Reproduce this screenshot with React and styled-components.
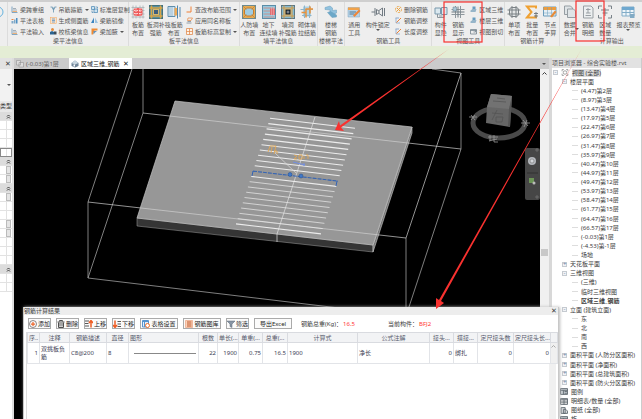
import styled, { createGlobalStyle } from 'styled-components';

const RED = '#f8312f';

const floors = [
  '(4.47)第2层',
  '(8.97)第3层',
  '(13.47)第4层',
  '(17.97)第5层',
  '(22.47)第6层',
  '(26.97)第7层',
  '(31.47)第8层',
  '(35.97)第9层',
  '(40.47)第10层',
  '(44.97)第11层',
  '(49.47)第12层',
  '(53.97)第13层',
  '(58.47)第14层',
  '(61.77)第15层',
  '(64.47)第16层',
  '(66.57)第17层',
  '(-0.03)第1层',
  '(-4.53)第-1层',
  '场地',
];

const tree = [
  { text: '视图 (全部)', level: 0, sign: '-', icon: 'views', selected: true },
  { text: '楼层平面', level: 1, sign: '-' },
  ...floors.map((text) => ({ text, level: 2 })),
  { text: '天花板平面', level: 1, sign: '+' },
  { text: '三维视图', level: 1, sign: '-' },
  { text: '(三维)', level: 2 },
  { text: '临时三维视图', level: 2 },
  { text: '区域三维_钢筋', level: 2, bold: true },
  { text: '立面 (建筑立面)', level: 1, sign: '-' },
  { text: '东', level: 2 },
  { text: '北', level: 2 },
  { text: '南', level: 2 },
  { text: '西', level: 2 },
  { text: '面积平面 (人防分区面积)', level: 1, sign: '+' },
  { text: '面积平面 (净面积)', level: 1, sign: '+' },
  { text: '面积平面 (总建筑面积)', level: 1, sign: '+' },
  { text: '面积平面 (防火分区面积)', level: 1, sign: '+' },
  { text: '图例', level: 0, icon: 'legend' },
  { text: '明细表/数量 (全部)', level: 0, icon: 'schedule' },
  { text: '图纸 (全部)', level: 0, icon: 'sheet' },
  { text: '族', level: 0, icon: 'legend' },
];

const ribbon = [
  {
    label: '梁平法信息',
    width: 122,
    items: [
      { width: 39, list: [['beam', '梁跨重组'], ['bars', '平法表格'], ['beam', '平法输入']] },
      { width: 42, list: [['hanger', '吊筋箍筋', true], ['side', '生成侧面筋'], ['person', '校核梁信息']] },
      { width: 41, list: [['copy', '标准层复制'], ['mirror', '梁筋镜像'], ['haunch', '梁加腋', true]] },
    ],
  },
  {
    label: '板平法信息',
    width: 111,
    items: [
      { width: 18, icon: 'slabGrid', lines: ['板筋', '布置'] },
      { width: 19, icon: 'slabHole', lines: ['板洞补', '强筋'] },
      { width: 19, icon: 'raft', lines: ['筏板筋', '布置'] },
      { width: 55, list: [['range', '查改布筋范围', true], ['apply', '应用同名称板'], ['window', '板筋标高复制', true]] },
    ],
  },
  {
    label: '墙平法信息',
    width: 78,
    items: [
      { width: 19, icon: 'shelter', lines: ['人防墙', '布置'] },
      { width: 19, icon: 'under', lines: ['地下', '连续墙'] },
      { width: 19, icon: 'wallHole', lines: ['墙洞', '补强筋'] },
      { width: 19, icon: 'brick', lines: ['砌体墙', '拉结筋'] },
    ],
  },
  {
    label: '楼梯平法',
    width: 27,
    items: [{ width: 26, icon: 'stair', lines: ['楼梯', '钢筋'] }],
  },
  {
    label: '钢筋工具',
    width: 87,
    items: [
      { width: 19, icon: 'note', lines: ['通用', '工具'] },
      { width: 30, icon: 'lock', lines: ['构件锁定'], more: true },
      { width: 38, list: [['remove', '删除钢筋'], ['adjust', '钢筋调整'], ['adjust', '长度调整']] },
    ],
  },
  {
    label: '视图工具',
    width: 73,
    items: [
      { width: 18, icon: 'display', lines: ['构件', '显隐'] },
      { width: 19, icon: 'cross', lines: ['钢筋', '显示'] },
      { width: 36, list: [['house', '区域三维'], ['house', '楼层三维'], ['section', '视图剖切']] },
    ],
  },
  {
    label: '钢筋计算',
    width: 55,
    items: [
      { width: 18, icon: 'globe', lines: ['单项', '布置'] },
      { width: 18, icon: 'sigma', lines: ['批量', '布置'] },
      { width: 18, icon: 'table', lines: ['节点', '手算'] },
    ],
  },
  {
    label: '计算输出',
    width: 104,
    items: [
      { width: 19, icon: 'merge', lines: ['数据', '合并'], side: true },
      { width: 18, icon: 'detail', lines: ['钢筋', '明细'] },
      { width: 17, icon: 'region', lines: ['区域', '数量'] },
      { width: 30, icon: 'report', lines: ['报表预览'], more: true },
      { width: 20, icon: 'report', lines: [] },
    ],
  },
];

const columns = [
  { title: '序..', value: '1', width: 12, align: 'right' },
  { title: '注释', value: '双挑板负筋', width: 30, wrap: true },
  { title: '钢筋描述', value: 'C8@200', width: 37 },
  { title: '直径', value: '8', width: 22 },
  { title: '图形', value: 'shape', width: 70, headAlign: 'left' },
  { title: '根数', value: '22', width: 19, align: 'right' },
  { title: '单长(...', value: '1900', width: 21, align: 'right' },
  { title: '单重(...', value: '0.75', width: 24, align: 'right' },
  { title: '总重(...', value: '16.5', width: 25, align: 'right' },
  { title: '计算式', value: '1900', width: 70 },
  { title: '公式注解', value: '净长', width: 72 },
  { title: '接头...', value: '0', width: 24, align: 'right' },
  { title: '搭接...', value: '绑扎', width: 24 },
  { title: '定尺接头数', value: '0', width: 36, align: 'right' },
  { title: '定尺接头长...', value: '0', width: 37, align: 'right' },
];

// property grid rows: h = section header, b = row with a small button
const props = ['h', '', '', '', 'box', 'h', 'b', 'b', 'h', 'b', '', '', 'b', 'b', '', '', '', 'h', '', ''];

const smallIcons = {
  beam: (
    <g fill="none" strokeWidth="1.5">
      <path d="M2 1v12h11" stroke="#5c8fb5" />
      <path d="M4 5h6M4 8h8" stroke="#8b9aa6" />
      <path d="M3 11h9" stroke="#ee9c4f" />
    </g>
  ),
  bars: (
    <g>
      <path d="M1 8h4v5H1zM6 5h3v8H6z" fill="#80a9c8" />
      <path d="M10 2h3v11h-3z" fill="#4c8ec2" />
      <path d="M1 5h4" stroke="#ec8744" strokeWidth="2" />
    </g>
  ),
  hanger: <path d="M1 2h4l2 4 2-4h4M7 6v7M4 3l3 5 3-5" fill="none" stroke="#6794b1" strokeWidth="1.6" />,
  side: (
    <g fill="none">
      <rect x="1" y="1" width="12" height="12" fill="#fbe3c9" stroke="#f2a65f" />
      <path d="M4 4h6M4 7h6M4 10h6" stroke="#568fc4" strokeWidth="1.5" />
    </g>
  ),
  person: (
    <g>
      <circle cx="5" cy="3" r="3" fill="#e68c3d" />
      <path d="M0 13V8l4-2 4 2v5z" fill="#2d6490" />
      <path d="M8 7h5v6H8z" fill="#3b4b58" />
    </g>
  ),
  copy: (
    <g fill="none" stroke="#508bb5" strokeWidth="1.5">
      <path d="M1 1h6v6H1zM6 6h7v7H6z" fill="#cce3f1" />
      <path d="M9 2h4v3M2 9v4h3" />
    </g>
  ),
  mirror: (
    <g>
      <path d="M6 1v11H0z" fill="#3c85c0" />
      <path d="M8 1v11h6z" fill="#9dc3df" />
    </g>
  ),
  haunch: (
    <g>
      <path d="M1 1h12v4H7L4 13H1z" fill="#f08b33" />
      <path d="M5 6h7l-4 3-3 4z" fill="#5d91bb" />
    </g>
  ),
  range: <path d="M10 1v11H1" fill="none" stroke="#f08037" strokeWidth="2" />,
  apply: (
    <g fill="none" strokeWidth="1.5">
      <path d="M4 2h9l-3 5H3z" stroke="#e98b48" />
      <path d="M1 12h10M3 9h7" stroke="#788793" />
    </g>
  ),
  window: <path d="M1 1h12v12H1zM7 1v12M1 7h12" fill="#fff2e6" stroke="#df884c" strokeWidth="1.5" />,
  remove: (
    <g fill="none" stroke="#eaa13d" strokeWidth="2">
      <circle cx="7" cy="7" r="6" strokeDasharray="4 2" />
      <path d="M4 4l6 6M10 4l-6 6" />
    </g>
  ),
  adjust: (
    <g fill="none" strokeWidth="2">
      <path d="M2 2v10h8" stroke="#9cb6d4" />
      <path d="M3 11l9-9" stroke="#ec8136" />
      <path d="M1 2h7" stroke="#8fa9cb" />
    </g>
  ),
  house: (
    <g>
      <path d="M5 1h6v9H5z" fill="#669cc0" />
      <path d="M1 9l4-3h8l-2 6H1z" fill="#96b5c9" />
    </g>
  ),
  section: <path d="M1 3h12v9H1zM1 5h12M7 8h4V5" fill="none" stroke="#6e7d88" strokeWidth="1.5" />,
};

const bigIcons = {
  slabGrid: (
    <g fill="none">
      <path d="M4 1v26M10 1v26M18 1v26M24 1v26M1 5h26M1 11h26M1 18h26M1 24h26" stroke="#a5adb2" strokeWidth="1.5" />
      <rect x="5" y="6" width="18" height="16" rx="5" fill="#f05c5c" />
      <path d="M10 6v16M18 6v16M6 11h16M6 17h16" stroke="#fff" strokeWidth="1.5" strokeDasharray="3 2" />
    </g>
  ),
  slabHole: (
    <g fill="none">
      <rect x="1" y="1" width="26" height="26" fill="#568e9f" stroke="#42717d" strokeWidth="2" />
      <path d="M5 1v26M23 1v26M1 6h26M1 22h26" stroke="#d7a547" strokeWidth="3" />
      <rect x="9" y="9" width="10" height="10" fill="#3f5f7d" stroke="#d8b76c" strokeWidth="2" />
    </g>
  ),
  raft: (
    <g>
      <path d="M2 3h14v20H2z" fill="#d7e7f2" stroke="#5e8ead" strokeWidth="2" />
      <path d="M6 3v20M10 3v20" stroke="#5e8ead" />
      <path d="M15 6h7v15h-7z" fill="#ecaa58" />
      <path d="M21 1v26M26 4v20" stroke="#5087af" strokeWidth="2" />
    </g>
  ),
  shelter: (
    <g fill="none">
      <rect x="1" y="1" width="26" height="26" fill="#e7ab52" stroke="#6c8a8f" strokeWidth="2" />
      <path d="M9 6h10l4 4v8l-4 4H9l-4-4v-8z" fill="#a0cce1" stroke="#c87c2a" strokeWidth="2" />
      <path d="M2 2l7 7M26 2l-7 7M2 26l7-7M26 26l-7-7" stroke="#9c7339" />
    </g>
  ),
  under: (
    <g>
      <rect x="1" y="1" width="26" height="26" fill="#95c9df" stroke="#5c8da7" strokeWidth="2" />
      <path d="M3 6h22M3 12h22M3 18h22M3 24h22" stroke="#db7f72" strokeWidth="1.5" />
      <path d="M16 7h10v13H16z" fill="#df6d72" />
      <path d="M19 4v18M23 4v18" stroke="#f3b9b9" />
    </g>
  ),
  wallHole: (
    <g fill="none">
      <rect x="1" y="1" width="26" height="26" fill="#87bad1" stroke="#5b7784" strokeWidth="2" />
      <path d="M6 1v26M22 1v26M1 6h26M1 22h26" stroke="#d39a44" strokeWidth="2" />
      <rect x="8" y="8" width="12" height="12" fill="#182530" stroke="#e0b56a" strokeWidth="2" />
      <path d="M14 11v6M11 14h6" stroke="#fff" />
    </g>
  ),
  brick: (
    <g fill="none">
      <path d="M6 3h16v20H6z" fill="#add2e5" />
      <path d="M1 9h25M4 21h19M9 1v25M19 1v25" stroke="#8fb4c9" strokeWidth="2" />
      <path d="M3 15h9M12 7v18M12 8h14M20 3v14" stroke="#e7923d" strokeWidth="3" />
    </g>
  ),
  stair: (
    <g stroke="#6b9fbc">
      <path d="M2 5l10-3 5 4v5l8-1v6l-7 3-6-5v-4L2 9z" fill="#91c2df" />
      <path d="M7 15l6-2 12 7v4l-9 1z" fill="#6ba8c9" />
    </g>
  ),
  note: (
    <g>
      <path d="M2 5h23v19H2z" fill="#b7d3e8" stroke="#7fa3bd" />
      <path d="M2 5h23v5H2z" fill="#f0a24a" />
      <path d="M5 14h13M5 18h10" stroke="#527891" strokeWidth="2" />
      <path d="M12 21L24 9l3 3-12 12z" fill="#ee8638" />
    </g>
  ),
  lock: (
    <path d="M1 14h7M8 6v16M11 9l5 3v4l-5 3zM16 11l7-5v16l-7-5M27 6v16" fill="none" stroke="#717a82" strokeWidth="2" />
  ),
  display: (
    <g fill="none">
      <path d="M2 6h11v12H2zM15 5h11v14H15z" fill="#dbe8ef" stroke="#7998ac" strokeWidth="2" />
      <path d="M7 18v7h13v-7M10 22h7" stroke="#8c969d" strokeWidth="2" />
    </g>
  ),
  cross: (
    <g fill="none">
      <path d="M9 2v24M19 2v24M1 9h26M1 19h26" stroke="#8d979d" strokeWidth="2" />
      <path d="M14 3v22M1 14h26" stroke="#717d84" strokeWidth="2" />
      <path d="M4 4h7v8H4z" fill="#aac6d5" stroke="#667f8d" />
    </g>
  ),
  globe: (
    <g fill="none" stroke="#7b8185" strokeWidth="2">
      <rect x="5" y="5" width="18" height="18" rx="5" fill="#e3e5e6" />
      <path d="M1 10h26M1 18h26M10 2v24M18 2v24" />
    </g>
  ),
  sigma: (
    <g fill="none">
      <path d="M22 7V3H4l9 11L4 25h18v-5" stroke="#efa031" strokeWidth="4" />
      <path d="M22 14v12M18 17h8M18 22h8" stroke="#777f84" strokeWidth="2" />
    </g>
  ),
  table: (
    <g>
      <path d="M1 4h25v18H1z" fill="#e6eff5" stroke="#6a9cbc" strokeWidth="2" />
      <path d="M1 4h25v6H1z" fill="#ec9c3e" />
      <path d="M1 16h24M9 5v16M17 5v16" stroke="#6a9cbc" />
      <path d="M14 23L24 11l3 3-9 11z" fill="#e78a36" />
    </g>
  ),
  merge: (
    <g fill="#dfe4e7" stroke="#959da3" strokeWidth="2">
      <path d="M3 2h12l4 4v13H3z" />
      <path d="M9 8h12l4 4v13H9z" />
    </g>
  ),
  detail: (
    <g fill="none" stroke="#999fa4" strokeWidth="2">
      <path d="M5 2h15l4 4v20H5z" fill="#eceff0" />
      <path d="M10 9h9M14 6v10M10 16h9M9 21h11" />
    </g>
  ),
  region: (
    <g fill="none" stroke="#7a8389" strokeWidth="2">
      <path d="M1 8V2h7M20 2h7v6M1 20v6h7M20 26h7v-6M6 10h16M9 16h10M14 6v16" />
    </g>
  ),
  report: (
    <g>
      <path d="M2 4h24v18H2z" fill="#eff6fa" stroke="#83adc8" strokeWidth="2" />
      <path d="M2 4h24v6H2z" fill="#6fa8cf" />
      <path d="M2 15h24M10 10v12M18 10v12" stroke="#83adc8" strokeWidth="2" />
      <path d="M18 18h9v8h-9z" fill="#82abc5" />
    </g>
  ),
};

const toolIcons = {
  add: (
    <g fill="none" stroke="#ed682d" strokeWidth="2">
      <circle cx="8" cy="8" r="7" stroke="#686060" strokeWidth="1.5" />
      <path d="M8 4v8M4 8h8" strokeWidth="2.5" />
    </g>
  ),
  del: (
    <g fill="none" stroke="#4e4e4e" strokeWidth="2">
      <path d="M1 4h14M5 3V1h6v2M3 5v10h10V5M6 6v7M10 6v7" />
    </g>
  ),
  up: (
    <g fill="none">
      <path d="M0 2h8M0 7h7M0 12h8" stroke="#555" strokeWidth="2" />
      <path d="M12 15V3M8 6l4-5 4 5" stroke="#ee5d24" strokeWidth="3" />
    </g>
  ),
  down: (
    <g fill="none">
      <path d="M9 3h7M9 8h7M9 13h7" stroke="#555" strokeWidth="2" />
      <path d="M4 1v12M0 10l4 5 4-5" stroke="#ee5d24" strokeWidth="3" />
    </g>
  ),
  setting: (
    <g fill="none">
      <path d="M1 1h12v13H1z" fill="#e7f0fa" stroke="#5794ce" strokeWidth="2" />
      <path d="M1 3h12M5 3v11" stroke="#5794ce" strokeWidth="2" />
      <circle cx="11" cy="11" r="4" stroke="#ee6f2b" strokeWidth="2" fill="#fff" />
    </g>
  ),
  library: (
    <g>
      <path d="M1 1h14v14H1z" fill="#fbd4bb" stroke="#e78a60" />
      <path d="M4 4h9M4 8h9M4 12h9" stroke="#bf562b" strokeWidth="2" />
    </g>
  ),
  filter: <path d="M0 2h16l-6 6v7l-4-2V8z" fill="#8996a5" stroke="#596777" />,
};

const treeIcons = {
  views: (
    <g fill="none" stroke="#696969">
      <circle cx="6" cy="6" r="3" />
      <path d="M1 4V1h3M8 1h3v3M1 8v3h3M8 11h3V8" />
    </g>
  ),
  legend: <path d="M0 1h12v10H0zM0 4h12M5 4v7M7 6h4M7 9h4" fill="#c5cbd0" stroke="#5e676e" strokeWidth="1.5" />,
  schedule: <path d="M0 1h12v10H0zM0 3h12M0 7h12M6 3v8" fill="#ddd" stroke="#5e676e" strokeWidth="1.5" />,
  sheet: <path d="M1 1h7v10H1zM5 4h4l3 3v4H5z" fill="#d7dadd" stroke="#5e676e" strokeWidth="1.5" />,
};

function RibbonItem({ item }) {
  if (item.list) {
    return (
      <SmallList $w={item.width}>
        {item.list.map(([icon, text, more]) => (
          <SmallButton key={text}>
            <svg width="7" height="7" viewBox="0 0 14 14">
              {smallIcons[icon]}
            </svg>
            {text}
            {more && <Caret />}
          </SmallButton>
        ))}
      </SmallList>
    );
  }
  return (
    <BigButton $w={item.width}>
      <svg width="14" height="14" viewBox="0 0 28 28">
        {bigIcons[item.icon]}
      </svg>
      {item.lines.map((line) => (
        <span key={line}>{line}</span>
      ))}
      {item.more && <Caret />}
      {item.side && <SideCaret />}
    </BigButton>
  );
}

function Model() {
  const rebars = Array.from({ length: 21 }, (_, i) => i);

  return (
    <ModelSvg viewBox="14 69 526 350" preserveAspectRatio="xMinYMin slice">
      <g fill="none" stroke="#b4b4b4" strokeWidth="0.7">
        <path d="M132 69L88 202V278L143 113V69" />
        <path d="M88 278L406 316V238" />
        <path d="M432 69L461 73V149L406 316" />
      </g>
      <path d="M137 218L373 245V252L137 226z" fill="#353535" stroke="#a5a5a5" strokeWidth="0.5" />
      <path d="M373 245L412 127V133L373 252z" fill="#777" stroke="#ccc" strokeWidth="0.6" />
      <path d="M175 101L412 127L373 245L137 218z" fill="#979797" stroke="#c4c4c4" strokeWidth="0.7" />
      <g fill="none" stroke="#d0d0d0" strokeWidth="0.7">
        <path d="M143 113L461 149M88 202L406 238L461 73" />
        <path d="M315 117L277 234V242" stroke="#e2e2e2" />
      </g>
      {rebars.map((i) => (
        <path
          key={i}
          d={`M${270 - i * 1.7} ${118.3 + i * 5.28}l85 10`}
          stroke={i === 10 ? '#3464b4' : '#ececec'}
          strokeWidth={i > 11 && i < 20 ? 0.7 : 1.1}
          strokeDasharray={i === 10 ? '4 1' : 'none'}
        />
      ))}
      <path d="M253 171l-1 5M337 181l-1 5" stroke="#3464b4" />
      <path d="M275 153L296 173" stroke="#ddd" strokeWidth="0.7" />
      <g fill="none" stroke="#e8a84c" strokeWidth="0.8">
        <path d="M268 152l2-6h6l-2 8M272 147l-1 6M274 151h3v3M294 155l3 1-3 3h3M299 155h3v4h-3zM304 156v3M306 155h2v4" />
      </g>
      <path d="M293 162l12 3M304 163v3" stroke="#728fe4" />
      <circle cx="290" cy="174.500" r="2" fill="#4078c8" stroke="#244c88" strokeWidth="0.500" />
      <circle cx="301" cy="176" r="2" fill="#4078c8" stroke="#244c88" strokeWidth="0.500" />

      <ellipse cx="499" cy="123" rx="26" ry="15" fill="none" stroke="#4a4a4a" strokeWidth="5" />
      <path d="M491 94l21 2-2 31-24-4 1-16z" fill="#666" />
      <path d="M491 94l21 2-3 13-22-2z" fill="#727272" />
      <path d="M509 109l3-13-2 31-2-1z" fill="#555" />
      <path d="M493 101l13 1M497 98l8 1M492 113l11 1M497 110l-5 10M496 117h7l-1 5h-6z" fill="none" stroke="#525252" strokeWidth="0.7" />
      <g fill="none" stroke="#999" strokeWidth="0.8">
        <path d="M469 117h8M471 115l4 5M475 115l-4 5" />
        <path d="M521 123h9M523 120l5 6M527 120l-3 7M488 137h10M490 135v6M494 135v7h4M489 141l8-2" />
      </g>
      <rect x="525" y="148" width="15" height="52" rx="2" fill="#464646" />
      <path d="M527 173h11" stroke="#303030" />
      <circle cx="532" cy="161" r="4" fill="#b4b7bc" />
      <circle cx="532" cy="161" r="2" fill="#d4d7db" stroke="#777" strokeWidth="0.6" />
      <path d="M529 178h5v5h-5z" fill="#6d9557" />
      <circle cx="534" cy="183" r="1.500" fill="#bbb" />
      <path d="M536 149h2v2h-2zM536 196h2v2h-2z" fill="none" stroke="#888" strokeWidth="0.5" />
    </ModelSvg>
  );
}

function ResultDialog() {
  return (
    <Dialog>
      <DialogTitle>
        钢筋计算结果
        <CloseButton aria-label="关闭">✕</CloseButton>
      </DialogTitle>
      <Tools>
        <ToolButton><ToolIcon name="add" />添加</ToolButton>
        <ToolButton><ToolIcon name="del" />删除</ToolButton>
        <ToolButton><ToolIcon name="up" />上移</ToolButton>
        <ToolButton><ToolIcon name="down" />下移</ToolButton>
        <ToolButton $wide><ToolIcon name="setting" />表格设置</ToolButton>
        <ToolButton $wide><ToolIcon name="library" />钢筋图库</ToolButton>
        <ToolButton><ToolIcon name="filter" />筛选</ToolButton>
        <ToolButton $wide>导出Excel</ToolButton>
        <Total>钢筋总重(Kg)：<Value>16.5</Value></Total>
        <Total>当前构件：<Value>BFJ2</Value></Total>
      </Tools>
      <TableArea>
        <ResultTable>
          <colgroup>
            {columns.map((c) => (
              <Col key={c.title} $w={c.width} />
            ))}
            <Col $w={7} />
          </colgroup>
          <thead>
            <tr>
              {columns.map((c) => (
                <Th key={c.title} $align={c.headAlign}>{c.title}</Th>
              ))}
              <Th />
            </tr>
          </thead>
          <tbody>
            <tr>
              {columns.map((c) => (
                <Td key={c.title} $align={c.align} $wrap={c.wrap}>
                  {c.value === 'shape' ? <BarShape /> : c.value}
                </Td>
              ))}
              <Td $scroll>
                <Chevron />
              </Td>
            </tr>
          </tbody>
        </ResultTable>
        <TableScroll />
      </TableArea>
    </Dialog>
  );
}

function ToolIcon({ name }) {
  return (
    <svg width="8" height="8" viewBox="0 0 16 16">
      {toolIcons[name]}
    </svg>
  );
}

function Chevron({ double }) {
  return (
    <svg width="5" height="5" viewBox="0 0 10 10">
      <path
        d={double ? 'M2 5l3-3 3 3M2 9l3-3 3 3' : 'M1 7l4-4 4 4'}
        fill="none"
        stroke="currentColor"
        strokeWidth="2"
      />
    </svg>
  );
}

export default function App() {
  return (
    <>
      <GlobalStyle />
      <Page>
        <TopEdge />
        <Ribbon>
          <CutGroup>
            <svg width="4" height="14" viewBox="0 0 8 28">
              <circle cx="-4" cy="14" r="10" fill="none" stroke="#66b3df" strokeWidth="2" />
            </svg>
          </CutGroup>
          {ribbon.map((group) => (
            <Group key={group.label} $w={group.width}>
              <GroupItems>
                {group.items.map((item, i) => (
                  <RibbonItem key={i} item={item} />
                ))}
              </GroupItems>
              <GroupLabel>{group.label}</GroupLabel>
            </Group>
          ))}
        </Ribbon>
        <OptionsBar />
        <Workspace>
          <Properties>
            <PropertiesTop>
              <CloseButton aria-label="关闭属性">✕</CloseButton>
            </PropertiesTop>
            <TypeSelector>
              <Caret />
            </TypeSelector>
            <TypeLabel>类型</TypeLabel>
            {props.map((kind, i) => (
              <PropertyRow key={i} $head={kind === 'h'} $box={kind === 'box'}>
                {kind === 'h' ? <Chevron double /> : <PropertyCell $button={kind === 'b'} />}
              </PropertyRow>
            ))}
          </Properties>
          <Center>
            <Tabs>
              <Tab>
                <svg width="8" height="8" viewBox="0 0 16 16">
                  <path d="M1 1h8v9H1zM6 5h9v9H6z" fill="#ddd" stroke="#888" />
                </svg>
                (-0.03)第1层
              </Tab>
              <Tab $active>
                <svg width="8" height="8" viewBox="0 0 16 16">
                  <path d="M1 6l7-5 7 5v6l-7 3-7-3z" fill="#71869a" />
                  <path d="M1 6l7-5 7 5-7 3z" fill="#c8d6e0" />
                  <path d="M5 9v4h3V9z" fill="#fff" />
                </svg>
                区域三维_钢筋
                <CloseButton aria-label="关闭视图">✕</CloseButton>
              </Tab>
              <TabMenu aria-label="视图列表">
                <Caret />
              </TabMenu>
            </Tabs>
            <View>
              <Model />
              <Scrollbar>
                <Chevron />
                <Thumb />
              </Scrollbar>
            </View>
          </Center>
          <Browser>
            <BrowserTitle>项目浏览器 - 综合实验楼.rvt</BrowserTitle>
            <Tree>
              {tree.map((node) => (
                <TreeRow key={node.text} $level={node.level} $bold={node.bold}>
                  {node.level === 2 && <Branch />}
                  {node.sign && <Expander>{node.sign}</Expander>}
                  {node.icon && (
                    <svg width="8" height="7" viewBox="0 0 12 12">
                      {treeIcons[node.icon]}
                    </svg>
                  )}
                  <NodeText $selected={node.selected}>{node.text}</NodeText>
                </TreeRow>
              ))}
            </Tree>
          </Browser>
        </Workspace>
        <ResultDialog />
        <Annotations viewBox="0 0 642 419" preserveAspectRatio="xMinYMin meet">
          <g fill="none" stroke={RED} strokeWidth="1.2">
            <rect x="444" y="2" width="38" height="40" />
            <rect x="576" y="1" width="28" height="40" />
          </g>
          <path d="M449 49L341 127.500L344 131L335 130L339 121L340 125.500z" fill={RED} />
          <path d="M581.500 49L441 301L444 303L436 309L436 298L439 300z" fill={RED} />
        </Annotations>
      </Page>
    </>
  );
}

const GlobalStyle = createGlobalStyle`
  * {
    box-sizing: border-box;
  }

  body {
    margin: 0;
    font-family: 'Noto Sans', 'Noto Sans CJK SC', sans-serif;
    font-size: 6px;
    line-height: 8px;
    color: #3c3c3c;
    overflow: hidden;
  }

  button {
    font: inherit;
    color: inherit;
    border: none;
    padding: 0;
    background: none;
    white-space: nowrap;
  }

  svg {
    flex: none;
  }
`;

const Page = styled.div`
  position: relative;
  display: flex;
  flex-direction: column;
  height: 100vh;
  overflow: hidden;
  background: #eee;
`;

const TopEdge = styled.div`
  flex: none;
  height: 2px;
  background: #cfcfcf;
`;

/* the last group continues past the right edge */
const Ribbon = styled.header`
  display: flex;
  flex: none;
  width: calc(100% + 22px);
  height: 44px;
  background: #eee;
  color: #555;
`;

const CutGroup = styled.div`
  flex: 7 0 0;
  padding-top: 3px;
  border-right: 1px solid #dcdcdc;
`;

const Group = styled.section`
  display: flex;
  flex-direction: column;
  flex: ${(p) => p.$w} 0 0;
  min-width: 0;
  border-right: 1px solid #dcdcdc;
`;

const GroupItems = styled.div`
  display: flex;
  flex: 1;
  padding-top: 2px;
`;

const GroupLabel = styled.div`
  height: 9px;
  text-align: center;
  white-space: nowrap;
`;

const SmallList = styled.div`
  display: flex;
  flex-direction: column;
  flex: ${(p) => p.$w} 0 0;
  min-width: 0;
  padding-left: 3px;
`;

const SmallButton = styled.button`
  display: flex;
  align-items: center;
  gap: 2px;
  height: 11px;
`;

const BigButton = styled.button`
  position: relative;
  display: flex;
  flex-direction: column;
  align-items: center;
  flex: ${(p) => p.$w} 0 0;
  min-width: 0;

  svg {
    margin: 1px 0 2px;
  }
`;

const Caret = styled.i`
  border: 2px solid transparent;
  border-top-color: #555;
  border-bottom: none;
`;

const SideCaret = styled(Caret)`
  position: absolute;
  right: 0;
  bottom: 7px;
`;

const OptionsBar = styled.div`
  flex: none;
  height: 12px;
  background: #e4edd5;
`;

const Workspace = styled.main`
  display: flex;
  flex: 1;
  min-height: 0;
`;

const Properties = styled.aside`
  flex: none;
  width: 14px;
  background: #fff;
  border-right: 2px solid #ddd;
`;

const PropertiesTop = styled.div`
  display: flex;
  justify-content: flex-end;
  height: 11px;
  background: #e2e2e2;
`;

const TypeSelector = styled.div`
  display: flex;
  justify-content: flex-end;
  align-items: center;
  height: 32px;
  padding-right: 1px;
  background: #f2f2f2;
`;

const TypeLabel = styled.div`
  height: 11px;
  line-height: 11px;
  background: #e8e8e8;
  white-space: nowrap;
`;

const PropertyRow = styled.div`
  display: flex;
  justify-content: flex-end;
  align-items: ${(p) => (p.$head ? 'center' : 'stretch')};
  height: 9px;
  padding-right: 1px;
  border-bottom: 1px solid #e2e2e2;
  background: ${(p) => (p.$head ? '#dcdcdc' : '#fff')};
  outline: ${(p) => (p.$box ? '1px solid #888' : 'none')};
  outline-offset: -1px;
`;

const PropertyCell = styled.span`
  width: 5px;
  border: ${(p) => (p.$button ? '1px solid #bbb' : 'none')};
  border-left: 1px solid ${(p) => (p.$button ? '#bbb' : '#e2e2e2')};
  background: ${(p) => (p.$button ? '#e5e5e5' : '#fff')};
`;

const Center = styled.section`
  display: flex;
  flex-direction: column;
  flex: 1;
  min-width: 0;
`;

const Tabs = styled.nav`
  display: flex;
  flex: none;
  gap: 8px;
  height: 11px;
  background: #cbcbcb;
`;

const Tab = styled.button`
  display: flex;
  align-items: center;
  gap: 2px;
  padding: 0 2px;
  color: ${(p) => (p.$active ? '#222' : '#666')};
  background: ${(p) => (p.$active ? '#fff' : 'transparent')};
`;

const TabMenu = styled.button`
  display: flex;
  align-items: center;
  margin-left: auto;
  padding-right: 3px;
`;

const CloseButton = styled.button`
  width: 8px;
  font-size: 7px;
`;

const View = styled.div`
  display: flex;
  flex: 1;
  min-height: 0;
  background: #000;
`;

const ModelSvg = styled.svg`
  flex: 1;
  min-width: 0;
  height: 100%;
  background: #000;
`;

const Scrollbar = styled.div`
  display: flex;
  flex-direction: column;
  align-items: center;
  justify-content: space-between;
  flex: none;
  width: 9px;
  padding: 2px 0 163px;
  background: #f0f0f0;
`;

const Thumb = styled.div`
  width: 7px;
  height: 7px;
  background: #c8c8c8;
`;

const Browser = styled.aside`
  display: flex;
  flex-direction: column;
  flex: none;
  width: 93px;
  border-left: 3px solid #d8d8d8;
  border-right: 1px solid #ccc;
  background: #fff;
`;

const BrowserTitle = styled.div`
  flex: none;
  height: 10px;
  line-height: 10px;
  background: #e2e2e2;
  color: #555;
  white-space: nowrap;
`;

/* the list runs a little past the bottom edge */
const Tree = styled.ul`
  display: flex;
  flex: 1;
  flex-direction: column;
  margin: 0 0 -5px;
  padding: 0;
  list-style: none;
`;

const indent = [8, 10, 20];

const TreeRow = styled.li`
  display: flex;
  flex: 1;
  align-items: center;
  gap: 3px;
  min-height: 0;
  padding-left: ${(p) => indent[p.$level]}px;
  font-weight: ${(p) => (p.$bold ? 700 : 400)};
  white-space: nowrap;

  &:first-child {
    padding-left: 1px;
  }
`;

const Branch = styled.i`
  width: 6px;
  border-top: 1px solid #ddd;
`;

const Expander = styled.button`
  width: 5px;
  height: 5px;
  line-height: 3px;
  border: 1px solid #c5cad0;
  background: #f1f3f6;
  color: #6b84a6;
`;

const NodeText = styled.span`
  background: ${(p) => (p.$selected ? '#dcdcdc' : 'transparent')};
`;

const Dialog = styled.section`
  position: absolute;
  top: 307px;
  right: 83px;
  bottom: 0;
  left: 23px;
  display: flex;
  flex-direction: column;
  border-left: 1px solid #c8c8c8;
  border-right: 1px solid #c8c8c8;
  background: #fff;
  box-shadow: 1px 0 3px #bbb;
`;

const DialogTitle = styled.div`
  display: flex;
  flex: none;
  justify-content: space-between;
  height: 8px;
  background: #ededed;
`;

const Tools = styled.div`
  display: flex;
  flex: none;
  align-items: center;
  gap: 5px;
  height: 17px;
  padding-left: 4px;
`;

const ToolButton = styled.button`
  display: flex;
  align-items: center;
  justify-content: center;
  gap: 1px;
  width: ${(p) => (p.$wide ? 38 : 23)}px;
  height: 11px;
  border: 1px solid #aaa;
  background: #fbfbfb;
  color: #222;
`;

const Total = styled.div`
  display: flex;
  gap: 1px;
  width: 82px;
  padding-left: 4px;
  white-space: nowrap;
`;

const Value = styled.span`
  color: #f33;
`;

const TableArea = styled.div`
  display: flex;
  flex: 1;
  flex-direction: column;
  margin: 0 2px;
  border-left: 1px solid #ddd;
`;

const TableScroll = styled.div`
  flex: 1;
  align-self: flex-end;
  width: 7px;
  background: #f0f0f0;
`;

const ResultTable = styled.table`
  width: 100%;
  table-layout: fixed;
  border-collapse: collapse;
`;

const Col = styled.col`
  width: ${(p) => p.$w}px;
`;

const Th = styled.th`
  height: 10px;
  padding: 0 1px;
  border: 1px solid #d9dbe0;
  background: #f2f3f5;
  color: #55586a;
  font-weight: 400;
  text-align: ${(p) => p.$align || 'center'};
  white-space: nowrap;
  overflow: hidden;
`;

const Td = styled.td`
  height: 21px;
  padding: ${(p) => (p.$scroll ? '0' : '0 1px')};
  border: 1px solid #e2e4e8;
  border-top: none;
  background: ${(p) => (p.$scroll ? '#f0f0f0' : '#fff')};
  color: ${(p) => (p.$scroll ? '#aaa' : '#3d4054')};
  text-align: ${(p) => p.$align || 'left'};
  vertical-align: ${(p) => (p.$scroll ? 'top' : 'middle')};
  white-space: ${(p) => (p.$wrap ? 'normal' : 'nowrap')};
`;

const BarShape = styled.i`
  display: block;
  margin: 0 1px 0 4px;
  border-top: 1px solid #888;
`;

const Annotations = styled.svg`
  position: absolute;
  top: 0;
  left: 0;
  width: 100%;
  height: 100%;
  pointer-events: none;
`;
